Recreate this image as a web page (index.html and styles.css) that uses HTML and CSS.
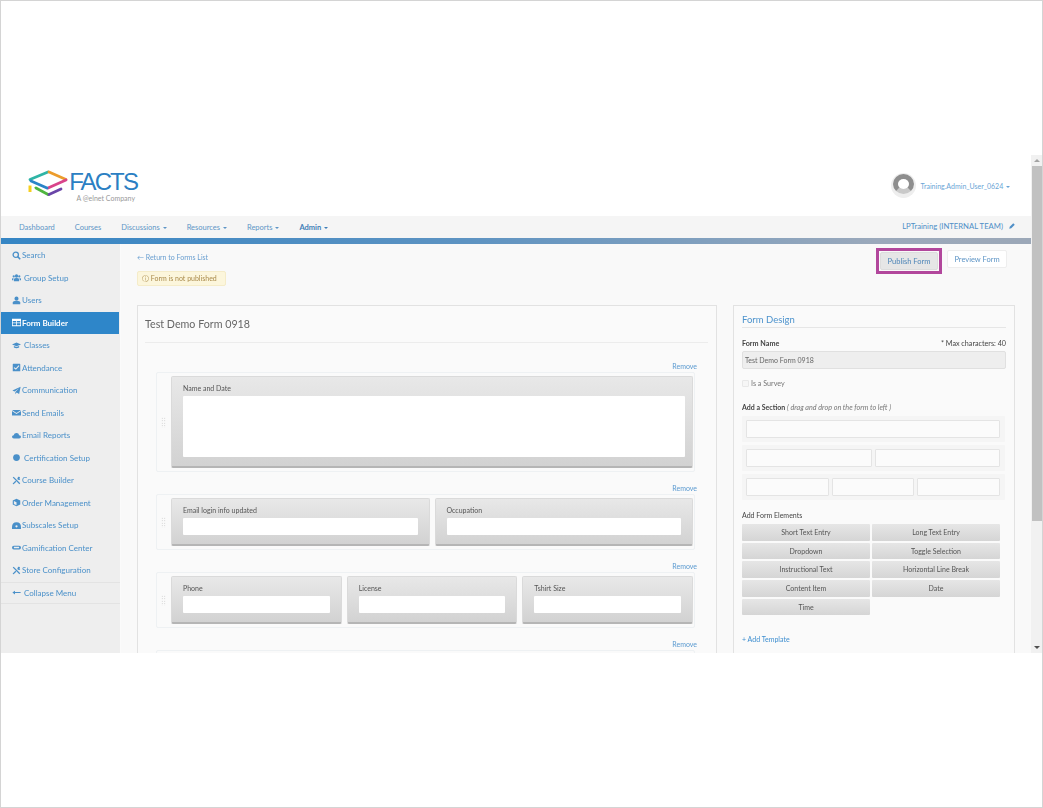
FILE: index.html
```html
<!DOCTYPE html>
<html lang="en">
<head>
    <meta charset="UTF-8">
    <title>Form Builder</title>
    <link rel="stylesheet" href="styles.css">
</head>
<body>
    <svg class="defs" width="0" height="0">
        <symbol id="i-search" viewBox="0 0 12 12"><circle cx="5" cy="5" r="3.5" fill="none" stroke="currentColor" stroke-width="1.8"/><path d="M7.5 7.5L11 11" stroke="currentColor" stroke-width="2"/></symbol>
        <symbol id="i-group" viewBox="0 0 12 12"><circle cx="6" cy="4" r="2.2"/><circle cx="2.3" cy="4.6" r="1.5"/><circle cx="9.7" cy="4.6" r="1.5"/><path d="M2.5 11V8.5Q2.5 6.6 6 6.6T9.5 8.5V11ZM0 9.5V8Q0 6.6 2 6.6L1.6 9.5ZM12 9.5V8Q12 6.6 10 6.6L10.4 9.5Z"/></symbol>
        <symbol id="i-user" viewBox="0 0 12 12"><circle cx="6" cy="3.5" r="2.7"/><path d="M1 11V8.8Q1 6.6 3.5 6.6H8.500Q11 6.6 11 8.800V11Z"/></symbol>
        <symbol id="i-table" viewBox="0 0 12 12"><path d="M0 1H12V11H0ZM1 4V6H5.500V4ZM6.500 4V6H11V4ZM1 7V9.500H5.500V7ZM6.500 7V9.500H11V7Z" fill-rule="evenodd"/></symbol>
        <symbol id="i-cap" viewBox="0 0 12 12"><path d="M6 2L12 4.500L6 7L0 4.500ZM2.500 6.500L6 8L9.500 6.500V8.500Q6 10.500 2.500 8.500Z"/></symbol>
        <symbol id="i-check" viewBox="0 0 12 12"><path d="M1.500 1H10.500Q11 1 11 1.500V10.500Q11 11 10.500 11H1.500Q1 11 1 10.500V1.500Q1 1 1.500 1ZM3 5.500L2.200 6.500L5.200 9L9.800 4L8.800 3L5.200 6.900Z" fill-rule="evenodd"/></symbol>
        <symbol id="i-send" viewBox="0 0 12 12"><path d="M11.500 1L9.500 10.500L6.200 8.800L4.500 11V8L9.500 3L3.500 7.300L0.500 6Z"/></symbol>
        <symbol id="i-mail" viewBox="0 0 12 12"><path d="M0 2.500H12L6 6.500ZM0 4L6 8L12 4V10H0Z"/></symbol>
        <symbol id="i-cloud" viewBox="0 0 12 12"><path d="M2.500 10Q0 10 0 7.800T2.200 5.500Q3 2.500 6 2.500T9.500 5.500Q12 5.800 12 7.800T9.500 10Z"/></symbol>
        <symbol id="i-dot" viewBox="0 0 12 12"><circle cx="6" cy="6" r="4.500"/></symbol>
        <symbol id="i-tools" viewBox="0 0 12 12"><path d="M1 2L2.200 1L11 9.800L9.800 11ZM8 1.200Q10.500 0.500 10.800 3L9.500 3.500L11 5Q8.500 6 7 4ZM4.500 6.200L5.800 7.500L2.500 10.800Q1 11.500 1 10Z"/></symbol>
        <symbol id="i-box" viewBox="0 0 12 12"><path d="M6 1L11 3.200V8.800L6 11L1 8.800V3.200ZM6 5.500L2.500 4V8L6 9.500Z" fill-rule="evenodd"/></symbol>
        <symbol id="i-gauge" viewBox="0 0 12 12"><path d="M6 1.500Q12 1.500 12 8V10.500H0V8Q0 1.500 6 1.500ZM6 5.500A1.500 1.500 0 1 0 6 8.500A1.500 1.500 0 1 0 6 5.500Z" fill-rule="evenodd"/></symbol>
        <symbol id="i-game" viewBox="0 0 12 12"><path d="M2.500 3.500H9.500Q12 3.500 12 6T9.500 8.500H2.500Q0 8.500 0 6T2.500 3.500ZM2.500 5V7H9.500V5Z" fill-rule="evenodd"/></symbol>
        <symbol id="i-arrow" viewBox="0 0 12 12"><path d="M0.500 6L4 3.500V5.300H11.500V6.700H4V8.500Z"/></symbol>
        <symbol id="i-pencil" viewBox="0 0 12 12"><path d="M8.500 0.500L11.500 3.500L4.500 10.500L0.500 11.500L1.500 7.500Z"/></symbol>
    </svg>

    <div class="screen">
        <div class="app">
            <div class="page">
                <header class="top">
                    <div class="logo">
                        <svg class="logo-mark" viewBox="0 0 40 28" width="40" height="28" fill="none" stroke-width="2.800" stroke-linecap="round">
                            <path d="M2 9.500L20 2" stroke="#2fb5a6"/>
                            <path d="M21 2L38 9.500" stroke="#ec9c2c"/>
                            <path d="M38 10L20 18" stroke="#d9448a"/>
                            <path d="M19 18L3 11" stroke="#2a84c8"/>
                            <path d="M2 15.500V22" stroke="#f6cf1f" stroke-width="3" stroke-linecap="butt"/>
                            <path d="M8 18L20 24.500" stroke="#4fb63f"/>
                            <path d="M21 24.500L33 19" stroke="#6a45a8"/>
                        </svg>
                        <div class="logo-text">
                            <div class="logo-name">FACTS</div>
                            <div class="logo-sub">A @elnet Company</div>
                        </div>
                    </div>
                    <div class="account">
                        <span class="avatar"><span class="avatar-face"></span></span>
                        <a class="account-name">Training.Admin_User_0624 <i class="caret"></i></a>
                    </div>
                </header>

                <nav class="nav">
                    <a>Dashboard</a>
                    <a>Courses</a>
                    <a>Discussions <i class="caret"></i></a>
                    <a>Resources <i class="caret"></i></a>
                    <a>Reports <i class="caret"></i></a>
                    <a class="nav-on">Admin <i class="caret"></i></a>
                    <span class="nav-org">LPTraining (INTERNAL TEAM) <svg class="ico"><use href="#i-pencil"/></svg></span>
                </nav>
                <div class="stripe"></div>

                <div class="body">
                    <aside class="side">
                        <a class="side-item"><svg class="ico"><use href="#i-search"/></svg>Search</a>
                        <a class="side-item wide"><svg class="ico"><use href="#i-group"/></svg>Group Setup</a>
                        <a class="side-item"><svg class="ico"><use href="#i-user"/></svg>Users</a>
                        <a class="side-item active"><svg class="ico"><use href="#i-table"/></svg>Form Builder</a>
                        <a class="side-item wide"><svg class="ico"><use href="#i-cap"/></svg>Classes</a>
                        <a class="side-item"><svg class="ico"><use href="#i-check"/></svg>Attendance</a>
                        <a class="side-item"><svg class="ico"><use href="#i-send"/></svg>Communication</a>
                        <a class="side-item"><svg class="ico"><use href="#i-mail"/></svg>Send Emails</a>
                        <a class="side-item"><svg class="ico"><use href="#i-cloud"/></svg>Email Reports</a>
                        <a class="side-item wide"><svg class="ico"><use href="#i-dot"/></svg>Certification Setup</a>
                        <a class="side-item"><svg class="ico"><use href="#i-tools"/></svg>Course Builder</a>
                        <a class="side-item"><svg class="ico"><use href="#i-box"/></svg>Order Management</a>
                        <a class="side-item"><svg class="ico"><use href="#i-gauge"/></svg>Subscales Setup</a>
                        <a class="side-item"><svg class="ico"><use href="#i-game"/></svg>Gamification Center</a>
                        <a class="side-item"><svg class="ico"><use href="#i-tools"/></svg>Store Configuration</a>
                        <a class="side-item wide collapse"><svg class="ico"><use href="#i-arrow"/></svg>Collapse Menu</a>
                    </aside>

                    <main class="main">
                        <div class="main-head">
                            <div>
                                <a class="back">&#8592; Return to Forms List</a>
                                <div class="alert">&#9432; Form is not published</div>
                            </div>
                            <div class="actions">
                                <span class="highlight"><a class="btn btn-publish">Publish Form</a></span>
                                <a class="btn">Preview Form</a>
                            </div>
                        </div>

                        <div class="panels">
                            <section class="panel form-panel">
                                <h2 class="form-title">Test Demo Form 0918</h2>

                                <a class="remove">Remove</a>
                                <div class="section section-tall">
                                    <span class="drag"></span>
                                    <div class="block">
                                        <label>Name and Date</label>
                                        <div class="field"></div>
                                    </div>
                                </div>

                                <a class="remove">Remove</a>
                                <div class="section">
                                    <span class="drag"></span>
                                    <div class="block">
                                        <label>Email login info updated</label>
                                        <div class="field"></div>
                                    </div>
                                    <div class="block">
                                        <label>Occupation</label>
                                        <div class="field"></div>
                                    </div>
                                </div>

                                <a class="remove">Remove</a>
                                <div class="section">
                                    <span class="drag"></span>
                                    <div class="block">
                                        <label>Phone</label>
                                        <div class="field"></div>
                                    </div>
                                    <div class="block">
                                        <label>License</label>
                                        <div class="field"></div>
                                    </div>
                                    <div class="block">
                                        <label>Tshirt Size</label>
                                        <div class="field"></div>
                                    </div>
                                </div>

                                <a class="remove">Remove</a>
                                <div class="section">
                                    <span class="drag"></span>
                                    <div class="block"></div>
                                </div>
                            </section>

                            <section class="panel design-panel">
                                <h3 class="design-title">Form Design</h3>
                                <div class="name-row">
                                    <b>Form Name</b>
                                    <span>* Max characters: 40</span>
                                </div>
                                <div class="name-input">Test Demo Form 0918</div>
                                <div class="survey"><span class="checkbox"></span>Is a Survey</div>
                                <div class="design-label"><b>Add a Section</b> <em>( drag and drop on the form to left )</em></div>
                                <div class="layout"><span></span></div>
                                <div class="layout"><span></span><span></span></div>
                                <div class="layout"><span></span><span></span><span></span></div>
                                <div class="design-label elements-label">Add Form Elements</div>
                                <div class="elements">
                                    <a>Short Text Entry</a>
                                    <a>Long Text Entry</a>
                                    <a>Dropdown</a>
                                    <a>Toggle Selection</a>
                                    <a>Instructional Text</a>
                                    <a>Horizontal Line Break</a>
                                    <a>Content Item</a>
                                    <a>Date</a>
                                    <a>Time</a>
                                </div>
                                <a class="add-template">+ Add Template</a>
                            </section>
                        </div>
                    </main>
                </div>
            </div>

            <div class="scrollbar">
                <span class="arrow-up"></span>
                <span class="thumb"></span>
                <span class="arrow-down"></span>
            </div>
        </div>
    </div>
</body>
</html>
```

FILE: styles.css
```css
* {
    margin: 0;
    padding: 0;
    box-sizing: border-box;
}
body {
    background-color: #fff;
    font-family: Lato, "Open Sans", sans-serif;
    font-size: 7.500px;
    color: #555;
}
.defs {
    display: block;
    height: 0;
}
.screen {
    height: 808px;
    padding-top: 154px;
    border: 1px solid #d4d4d4;
    background-color: #fff;
}
.app {
    display: flex;
    height: 498px;
    overflow: hidden;
    filter: blur(0.6px);
}
.page {
    flex: 1;
    min-width: 0;
}
.ico {
    width: 9px;
    height: 9px;
    fill: currentColor;
    flex: none;
}
.caret {
    display: inline-block;
    width: 0;
    height: 0;
    margin-left: 1px;
    vertical-align: middle;
    border-top: 2px solid;
    border-left: 2px solid transparent;
    border-right: 2px solid transparent;
}

/* header */
.top {
    display: flex;
    justify-content: space-between;
    align-items: center;
    height: 61px;
    padding: 0 21px 0 27px;
    background-color: #fff;
}
.logo {
    display: flex;
    align-items: flex-start;
    gap: 1px;
}
.logo-text {
    text-align: right;
}
.logo-name {
    font-family: "Liberation Sans", sans-serif;
    font-size: 24px;
    line-height: 24px;
    letter-spacing: -1.900px;
    color: #2b7fc3;
    width: 68px;
}
.logo-sub {
    font-size: 7px;
    line-height: 8px;
    margin-right: 2px;
    color: #999;
    white-space: nowrap;
}
.account {
    display: flex;
    align-items: center;
    gap: 5px;
}
.avatar {
    display: block;
    width: 25px;
    height: 25px;
    border-radius: 50%;
    background-color: #eee;
    padding: 1px 2px 4px;
}
.avatar-face {
    display: block;
    height: 100%;
    border-radius: 50%;
    border: 5px solid #8e8e8e;
    border-bottom-color: #c9c9c9;
    background-color: #fff;
}
.account-name {
    color: #6aa5d6;
    font-size: 7px;
}

/* nav */
.nav {
    display: flex;
    align-items: center;
    gap: 20px;
    height: 22px;
    padding: 0 16px 0 18px;
    background-color: #f5f5f5;
    color: #5e95c6;
}
.nav-on {
    font-weight: 700;
    color: #3f7fb8;
}
.nav-org {
    display: flex;
    align-items: center;
    gap: 6px;
    margin-left: auto;
    margin-top: -3px;
    font-size: 7.700px;
    color: #4f8fc7;
}
.nav-org .ico {
    width: 6px;
    height: 6px;
}
.stripe {
    height: 6px;
    background: linear-gradient(to right, #3585c4 0%, #5d93c2 45%, #9ba9bb 85%, #9ca8b8 100%);
}

/* layout */
.body {
    display: flex;
    height: 409px;
}
.side {
    flex: none;
    width: 119px;
    background-color: #eee;
}
.side-item {
    display: flex;
    align-items: center;
    gap: 1px;
    height: 22.500px;
    padding-left: 11px;
    font-size: 8px;
    color: #4a90c9;
}
.side-item.wide {
    gap: 3px;
}
.side-item.active {
    width: 118px;
    background-color: #2e86c9;
    color: #fff;
    font-weight: 700;
}
.collapse {
    border-top: 1px solid #e3e3e3;
    border-bottom: 1px solid #e3e3e3;
}
.main {
    flex: 1;
    min-width: 0;
    padding-left: 16px;
    background-color: #f9f9f9;
    border-left: 1px solid #fbfbfb;
}
.main-head {
    display: flex;
    justify-content: space-between;
    height: 61px;
    padding: 7px 24px 0 0;
}
.back {
    display: block;
    height: 20px;
    line-height: 12px;
    font-size: 7px;
    color: #6a9fd0;
}
.alert {
    display: flex;
    align-items: center;
    width: 89px;
    height: 15px;
    padding-left: 4px;
    background-color: #fcf6dc;
    border: 1px solid #f5ecc9;
    border-radius: 2px;
    color: #a98a4a;
    font-size: 7px;
    white-space: nowrap;
}
.actions {
    display: flex;
    align-items: flex-start;
    gap: 5px;
    margin-top: -3px;
}
.highlight {
    display: block;
    padding: 1px;
    border: 3px solid #b2479c;
}
.btn {
    display: block;
    height: 18px;
    line-height: 17px;
    background-color: #fff;
    border: 1px solid #eee;
    border-radius: 2px;
    color: #5e95c6;
    margin-top: 2px;
    width: 60px;
    text-align: center;
    white-space: nowrap;
}
.btn-publish {
    margin-top: 0;
    width: 58px;
    height: 18px;
    background-color: #e6e6e6;
    border-color: #ddd;
    color: #4f86b8;
}
.panels {
    display: flex;
    gap: 16px;
}
.panel {
    background-color: #fafafa;
    border: 1px solid #e2e2e2;
}

/* form preview */
.form-panel {
    width: 580px;
    height: 500px;
    padding: 9px 8px 0 7px;
}
.form-title {
    height: 28px;
    line-height: 18px;
    font-size: 10.700px;
    font-weight: 400;
    color: #666;
    border-bottom: 1px solid #ececec;
}
.remove {
    display: block;
    height: 11px;
    line-height: 10px;
    margin: 11px 11px 0 0;
    text-align: right;
    font-size: 7px;
    color: #5b9ad0;
}
.form-title + .remove {
    margin-top: 18px;
}
.section {
    display: flex;
    gap: 5px;
    height: 56px;
    margin: 0 13px 0 11px;
    padding: 3px 1px 3px 0;
    border: 1px solid #eef1f3;
    border-radius: 2px;
}
.section-tall {
    height: 100px;
}
.drag {
    flex: none;
    width: 5px;
    height: 11px;
    margin-left: 4px;
    align-self: center;
    background-image: radial-gradient(#c4c4c4 0.7px, transparent 0.8px);
    background-size: 2.500px 2.500px;
}
.block {
    display: flex;
    flex-direction: column;
    flex: 1;
    min-width: 0;
    padding: 5px 11px 9px;
    background: linear-gradient(to bottom, #e8e8e8, #d2d2d2);
    border: 1px solid #dadada;
    border-bottom: 2px solid #b5b5b5;
    border-radius: 2px;
}
.section-tall .block {
    padding-right: 7px;
}
.block label {
    height: 12px;
    line-height: 12px;
    margin-bottom: 2px;
    font-size: 7px;
    color: #555;
}
.field {
    flex: 1;
    background-color: #fff;
    border-radius: 1px;
}

/* design side */
.design-panel {
    width: 282px;
    height: 500px;
    padding: 8px 8px 0;
}
.design-title {
    height: 14px;
    line-height: 12px;
    font-size: 9.500px;
    font-weight: 400;
    color: #4d93cd;
    border-bottom: 1px solid #e6e6e6;
}
.name-row {
    display: flex;
    justify-content: space-between;
    height: 12px;
    line-height: 12px;
    margin-top: 10px;
    font-size: 7.200px;
    color: #444;
}
.name-input {
    height: 18px;
    line-height: 17px;
    margin-top: 1px;
    padding-left: 2px;
    background-color: #eee;
    border: 1px solid #e0e0e0;
    border-radius: 2px;
    font-size: 7px;
    color: #666;
}
.survey {
    display: flex;
    align-items: center;
    gap: 2px;
    height: 12px;
    margin-top: 8px;
    font-size: 7.200px;
    color: #777;
}
.checkbox {
    width: 7px;
    height: 7px;
    border: 1px solid #e8e8e8;
    border-radius: 1px;
    background-color: #f6f6f6;
}
.design-label {
    height: 12px;
    line-height: 12px;
    margin: 12px 0 3px;
    font-size: 7px;
    color: #444;
}
.design-label em {
    color: #777;
    font-size: 7.200px;
}
.elements-label {
    margin-top: 9px;
}
.layout {
    display: flex;
    gap: 3px;
    width: 263px;
    height: 26px;
    margin-bottom: 3px;
    padding: 4px 5px 4px 4px;
    background-color: #f5f5f5;
    border-radius: 1px;
}
.layout span {
    flex: 1;
    background-color: #fbfbfb;
    border: 1px solid #e4e4e4;
    border-radius: 1px;
}
.elements {
    display: grid;
    grid-template-columns: 128px 128px;
    gap: 2px;
}
.elements a {
    display: block;
    height: 16.700px;
    line-height: 17px;
    text-align: center;
    background: linear-gradient(to bottom, #e6e6e6, #d5d5d5);
    border-radius: 1px;
    font-size: 7px;
    color: #555;
}
.add-template {
    display: block;
    margin-top: 18px;
    font-size: 7px;
    line-height: 12px;
    color: #3f8fd0;
}

/* scrollbar */
.scrollbar {
    position: relative;
    flex: none;
    width: 11px;
    background-color: #f1f1f1;
}
.thumb {
    position: absolute;
    top: 11px;
    left: 1px;
    right: 0;
    height: 355px;
    background-color: #c1c1c1;
}
.arrow-up,
.arrow-down {
    position: absolute;
    left: 3px;
    width: 0;
    height: 0;
    border-left: 3px solid transparent;
    border-right: 3px solid transparent;
}
.arrow-up {
    top: 4px;
    border-bottom: 3px solid #a3a3a3;
}
.arrow-down {
    bottom: 4px;
    border-top: 3px solid #505050;
}
```
